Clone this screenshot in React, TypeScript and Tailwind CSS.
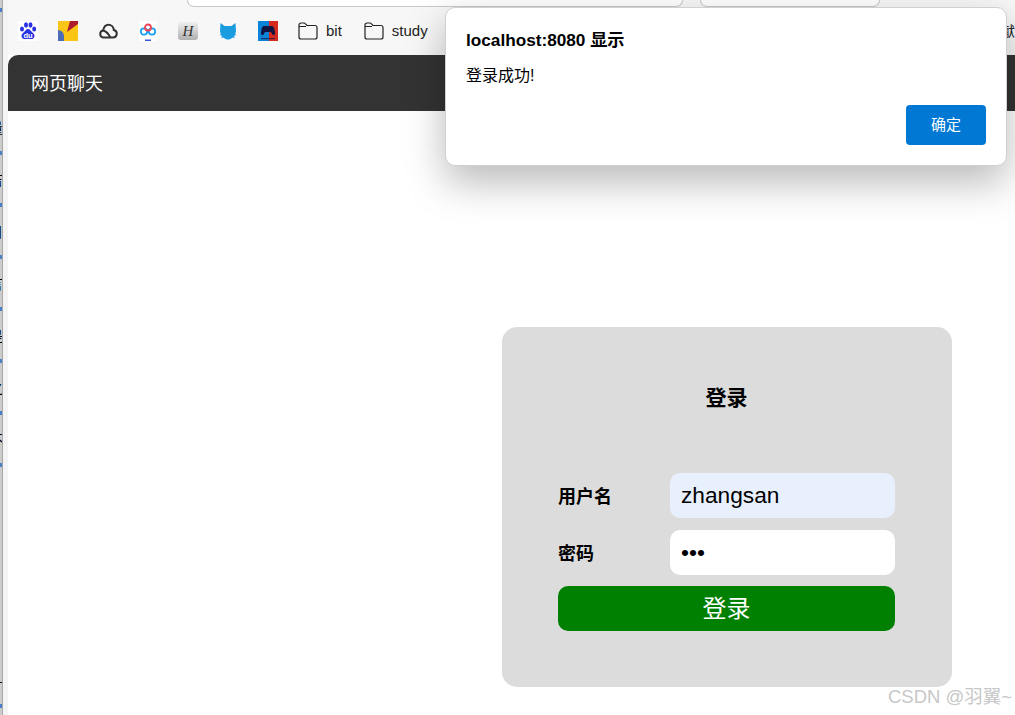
const sans = "font-['Liberation_Sans','Noto_Sans_CJK_SC',sans-serif]";

const BaiduIcon = () => (
  <svg width="20" height="20" viewBox="0 0 20 20">
    <rect width="20" height="20" fill="#fff" />
    <ellipse cx="4" cy="8" rx="2" ry="2.6" fill="#2932e1" />
    <ellipse cx="8" cy="4" rx="2" ry="2.7" fill="#2932e1" />
    <ellipse cx="12.5" cy="4" rx="2" ry="2.7" fill="#2932e1" />
    <ellipse cx="16.2" cy="8" rx="2" ry="2.6" fill="#2932e1" />
    <path d="M10 8c-2 0-2.500 2-4.500 3.500C3.500 13 3 15 4 16.800c1 1.500 3 1.500 6 1 3 .5 5 .5 6-1 1-1.800.5-3.800-1.500-5.300C12.500 10 12 8 10 8z" fill="#2932e1" />
    <text x="10" y="16.500" textAnchor="middle" fontSize="7.500" fontWeight="700" fill="#fff" fontFamily="Liberation Sans">du</text>
  </svg>
);

const YellowIcon = () => (
  <svg width="20" height="20" viewBox="0 0 20 20">
    <rect width="20" height="20" fill="#fac515" />
    <path d="M9 11L12 0h8v3z" fill="#ac1c2d" />
    <path d="M0 9a6 6 0 0 1 6 6v5H0z" fill="#4d6cb6" />
  </svg>
);

const CloudIcon = () => (
  <svg width="20" height="20" viewBox="0 0 20 20" fill="none" stroke="#333" strokeWidth="2">
    <path d="M5 16.500h10a3.800 3.800 0 0 0 .8-7.500A5.500 5.500 0 0 0 10.300 3.800C7 3.800 5.800 6.500 5 9.500a3.600 3.600 0 0 0 0 7z" />
    <path d="M5 9.200c3 1 5.800 4 7.300 7.300" />
  </svg>
);

const RingsIcon = () => (
  <svg width="18" height="20" viewBox="0 0 18 20" fill="none">
    <rect width="18" height="20" rx="2" fill="#fff" />
    <circle cx="5" cy="10.500" r="3.200" stroke="#1aa0f0" strokeWidth="1.800" />
    <circle cx="13" cy="10.500" r="3.200" stroke="#1aa0f0" strokeWidth="1.800" />
    <circle cx="9" cy="6.500" r="3" stroke="#ee4458" strokeWidth="1.800" />
    <rect x="6" y="18.500" width="6" height="1.500" fill="#3a55d8" />
  </svg>
);

const HIcon = () => (
  <div className="w-5 h-[18px] rounded-[3px] bg-gradient-to-b from-[#f0f0f0] to-[#b0b0b0] flex items-center justify-center font-['Liberation_Serif',serif] italic text-[15px] leading-none text-[#333]">
    H
  </div>
);

const CatIcon = () => (
  <svg width="18" height="18" viewBox="0 0 18 18">
    <path d="M1.500 1L5.500 4h7l4-3 .5 8c0 1-.3 2-1 3l1.500 1-2 .5-.5 1 1 1.500-2.500-.5C12 17 10.500 17.500 9 17.500S6 17 4.500 15.500L2 16l1-1.500-.5-1-2-.5 1.500-1c-.7-1-1-2-1-3z" fill="#1b9be0" />
  </svg>
);

const GamepadIcon = () => (
  <svg width="20" height="20" viewBox="0 0 20 20">
    <rect width="11" height="20" fill="#0a84d8" />
    <rect x="11" width="9" height="20" fill="#d42a20" />
    <path d="M6 5h8c2 0 2.500 3 3 7 .2 2-1.500 3-2.500 1.500L13 11H7l-1.500 2.500C4.500 15 2.800 14 3 12c.5-4 1-7 3-7z" fill="#10163f" />
    <rect x="3" y="17" width="14" height="1.200" fill="#10163f" opacity="0.7" />
  </svg>
);

const FolderIcon = () => (
  <svg width="20" height="18" viewBox="0 0 20 18" fill="none" stroke="#222" strokeWidth="1.200">
    <path d="M1 4.500V15a2 2 0 0 0 2 2h14a2 2 0 0 0 2-2V5.500a2 2 0 0 0-2-2H9L7.500 1.800C7 1.200 6.500 1 6 1H3a2 2 0 0 0-2 2v1.500h7" />
  </svg>
);

const ticks = ["吉", "日", "言", "是", "之", "不", ""];

const Fragment = ({ text }: { text: string }) => (
  <div className={`${sans} text-[14px] leading-[14px] -ml-[11px] w-[14px] text-black`}>{text}</div>
);

const LeftStrip = () => (
  <div className="w-2 shrink-0 flex bg-[#f4f4f4]">
    <div className="w-[3px] flex flex-col bg-[#cccccc] border-r border-[#a8a8a8] overflow-hidden">
      <div className="h-1 mt-2 bg-[#4a7fc8] shrink-0" />
      <div className="mt-[109px] mb-4 shrink-0">
        <Fragment text="量" />
      </div>
      {ticks.map((t) => (
        <div key={t} className="shrink-0 h-[52px]">
          <div className="h-1 bg-[#4a7fc8]" />
          <div className="mt-[18px]">
            <Fragment text={t} />
          </div>
        </div>
      ))}
      <div className="h-px mt-[167px] bg-black shrink-0" />
      <div className="h-1 mt-[21px] bg-[#4a7fc8] shrink-0" />
    </div>
  </div>
);

const Bookmarks = () => (
  <div className={`${sans} flex-1 flex items-center gap-5 pl-[10px] text-[15px] text-[#222]`}>
    <BaiduIcon />
    <YellowIcon />
    <CloudIcon />
    <div className="w-5 flex justify-center">
      <RingsIcon />
    </div>
    <HIcon />
    <div className="w-5 flex justify-center">
      <CatIcon />
    </div>
    <GamepadIcon />
    <div className="flex items-center gap-2">
      <FolderIcon />
      <span>bit</span>
    </div>
    <div className="flex items-center gap-2 ml-0.5">
      <FolderIcon />
      <span>study</span>
    </div>
    <span className="ml-auto shrink-0 w-[10px] overflow-hidden flex justify-end text-[14px] whitespace-nowrap">献</span>
  </div>
);

export default function App() {
  return (
    <div className={`${sans} relative w-[1015px] h-[715px] overflow-hidden bg-white flex`}>
      <LeftStrip />
      <div className="flex-1 flex flex-col min-w-0">
        <div className="h-[55px] shrink-0 bg-[#f7f7f7] flex flex-col">
          <div className="h-[7px] flex gap-[17px] pl-[179px]">
            <div className="w-[496px] h-[7px] bg-white border border-t-0 border-[#c8c8c8] rounded-b-[14px]" />
            <div className="w-[180px] h-[7px] bg-white border border-t-0 border-[#c8c8c8] rounded-b-[14px]" />
          </div>
          <Bookmarks />
        </div>

        <div className="h-14 shrink-0 bg-[#333333] rounded-tl-[10px] flex items-center pl-[23px] pt-0.5 text-white text-[18px]">
          网页聊天
        </div>
        <div className="pl-[494px] pt-[216px]">
          <div className="w-[450px] h-[360px] bg-[#dcdcdc] rounded-[15px] pl-14 pt-5">
            <div className="w-[337px] h-[102px] flex items-center justify-center font-bold text-[21px] text-black">
              登录
            </div>
            <div className="w-[337px] flex flex-col mt-6">
              <div className="flex items-center h-[45px]">
                <label className="w-28 mt-1 font-bold text-[18px] text-black">用户名</label>
                <input
                  readOnly
                  value="zhangsan"
                  className="w-[225px] h-[45px] rounded-[10px] bg-[#e8f0fe] pl-[11px] text-[22.7px] text-black outline-none"
                />
              </div>
              <div className="flex items-center h-[45px] mt-3">
                <label className="w-28 mt-1 font-bold text-[18px] text-black">密码</label>
                <input
                  readOnly
                  type="password"
                  value="123"
                  className="w-[225px] h-[45px] rounded-[10px] bg-white pl-[11px] text-[22.7px] text-black outline-none"
                />
              </div>
              <button className="h-[45px] mt-[11px] rounded-[10px] bg-[#008000] text-white text-[24px]">
                登录
              </button>
            </div>
          </div>
        </div>
      </div>

      <div className="absolute left-[445px] top-[7px] w-[562px] h-[159px] bg-white rounded-[10px] border border-[#d0d0d0] shadow-[0_16px_40px_rgba(0,0,0,0.28)] pl-5 pr-5 flex flex-col">
        <div className="mt-[21px] text-[17.2px] leading-[22px] font-bold text-black">localhost:8080 显示</div>
        <div className="mt-[15px] text-[16px] leading-5 text-black">登录成功!</div>
        <button className="self-end mt-[19px] w-20 h-10 rounded-[4px] bg-[#0078d4] text-white text-[15px]">
          确定
        </button>
      </div>

      <div className="absolute left-[888px] top-[686px] text-[18.5px] leading-[22px] text-[#c8c8c8] whitespace-nowrap">
        CSDN @羽翼~
      </div>
    </div>
  );
}
